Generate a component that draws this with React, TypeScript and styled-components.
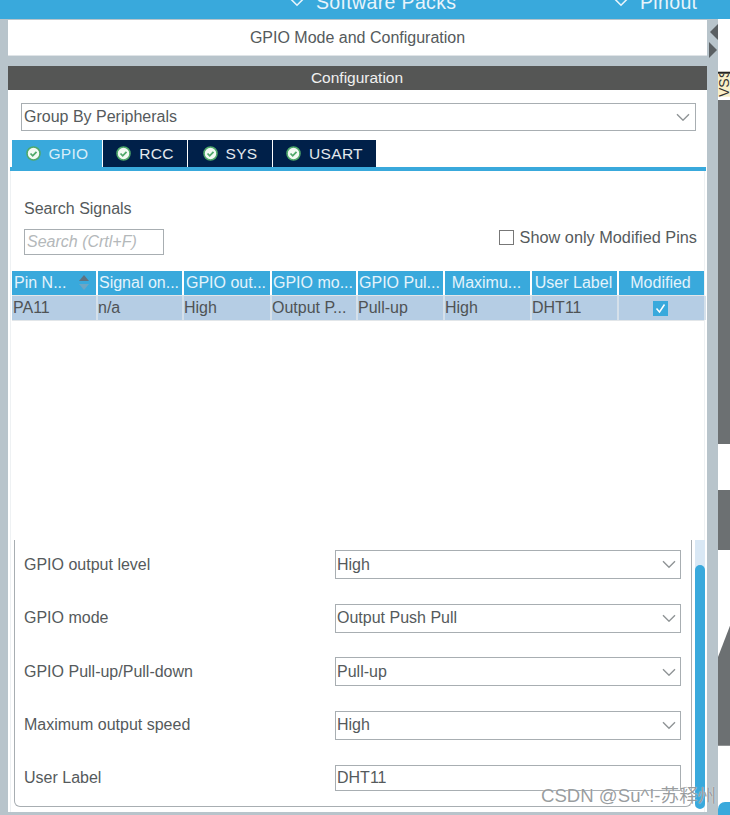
import styled, { createGlobalStyle } from "styled-components";

const GlobalStyle = createGlobalStyle`
  html, body {
    margin: 0;
    padding: 0;
    height: 815px;
    overflow: hidden;
    background: #b8c4cb;
    font-family: "Liberation Sans", Arial, sans-serif;
    color: #555a5c;
  }
  * { box-sizing: border-box; }
`;

const Page = styled.div`
  width: 730px;
  height: 815px;
  position: relative;
  overflow: hidden;
`;

const TopBar = styled.div`
  height: 19px;
  background: #39a9dc;
  display: flex;
  align-items: flex-end;
  overflow: hidden;
  padding: 0 0 7px 289px;
  color: #e8f4fb;
  font-size: 19.5px;
  letter-spacing: 0.35px;
`;

const TopItem = styled.div<{ $width: number }>`
  width: ${(p) => p.$width}px;
  display: flex;
  align-items: center;
  gap: 11px;
  line-height: 20px;
  white-space: nowrap;
`;

const Main = styled.div`
  height: 796px;
  display: flex;
  padding-left: 8px;
`;

const LeftPane = styled.div`
  width: 699px;
  display: flex;
  flex-direction: column;
`;

const TitleBar = styled.div`
  height: 36px;
  margin-top: 1px;
  background: #fff;
  border-bottom: 1px solid #dfe4e7;
  text-align: center;
  font-size: 16px;
  line-height: 35px;
`;

const ConfigPanel = styled.div`
  margin-top: 10px;
  height: 746px;
  background: #fff;
  display: flex;
  flex-direction: column;
`;

const ConfigHeader = styled.div`
  height: 24px;
  background: #555655;
  color: #f0f0f0;
  text-align: center;
  font-size: 15.5px;
  line-height: 23px;
  padding-right: 1px;
`;

const GroupSelect = styled.div`
  margin: 13px 11px 0 13px;
  height: 28px;
  border: 1px solid #a8aeb2;
  display: flex;
  align-items: center;
  justify-content: space-between;
  padding: 0 5px 0 2px;
  font-size: 16px;
`;

const Tabs = styled.div`
  display: flex;
  gap: 1px;
  margin: 9px 0 0 4px;
  height: 27px;
`;

const Tab = styled.div<{ $active?: boolean; $width: number }>`
  width: ${(p) => p.$width}px;
  background: ${(p) => (p.$active ? "#39a9dc" : "#002049")};
  color: ${(p) => (p.$active ? "#d8eef9" : "#e4e9ee")};
  display: flex;
  align-items: center;
  justify-content: center;
  gap: 8px;
  font-size: 15.5px;
  letter-spacing: 0.3px;
`;

const TabLine = styled.div`
  height: 4px;
  margin: 0 1px 0 2px;
  background: #39a9dc;
`;

const TabBody = styled.div`
  flex: 1;
  margin: 0 2px 0 2px;
  border-left: 1px solid #eef1f3;
  border-right: 1px solid #eef1f3;
  display: flex;
  flex-direction: column;
`;

const SearchRow = styled.div`
  display: flex;
  justify-content: space-between;
  align-items: flex-end;
  padding: 29px 7px 0 13px;
`;

const SearchColumn = styled.div`
  display: flex;
  flex-direction: column;
  gap: 11px;
`;

const SearchLabel = styled.div`
  font-size: 16px;
  line-height: 18px;
`;

const SearchBox = styled.div`
  width: 140px;
  height: 26px;
  border: 1px solid #a8aeb2;
  padding: 0 2px;
  font-size: 16px;
  line-height: 23px;
  font-style: italic;
  color: #b4b8ba;
`;

const ModifiedToggle = styled.div`
  display: flex;
  align-items: center;
  gap: 6px;
  font-size: 16.3px;
  line-height: 18px;
  margin-bottom: 9px;
`;

const CheckBox = styled.div`
  width: 15px;
  height: 15px;
  border: 1px solid #777;
  background: #fff;
`;

const Table = styled.div`
  margin: 16px 0 0 1px;
`;

const TableRow = styled.div<{ $head?: boolean }>`
  display: grid;
  grid-template-columns: 86px 86px 88px 86px 87px 87px 87px 87px;
  height: 25px;
  background: ${(p) => (p.$head ? "#fff" : "#b5cde4")};
  border-bottom: 1px solid #e2e6e9;
`;

const HeadCell = styled.div<{ $first?: boolean }>`
  background: #39a9dc;
  color: #e4f3fb;
  margin-right: 2px;
  padding: 0 2px 0 ${(p) => (p.$first ? 2 : 0)}px;
  height: 24px;
  font-size: 16px;
  line-height: 24px;
  white-space: nowrap;
  overflow: hidden;
  display: flex;
  align-items: center;
  justify-content: ${(p) => (p.$first ? "flex-start" : "center")};
  position: relative;
`;

const BodyCell = styled.div<{ $center?: boolean; $first?: boolean }>`
  border-right: 2px solid #d5e0ea;
  padding-left: ${(p) => (p.$first ? 1 : 0)}px;
  font-size: 16px;
  line-height: 24px;
  white-space: nowrap;
  overflow: hidden;
  color: #4f5355;
  display: flex;
  align-items: center;
  justify-content: ${(p) => (p.$center ? "center" : "flex-start")};
`;

const Tick = styled.div`
  width: 15px;
  height: 15px;
  margin-right: 2px;
  background: #39a9dc;
  display: flex;
  align-items: center;
  justify-content: center;
`;

const SortMark = styled.svg`
  position: absolute;
  right: 6px;
  top: 3px;
`;

const Spacer = styled.div`
  flex: 1;
`;

const DetailArea = styled.div`
  height: 267px;
  margin-bottom: 5px;
  display: flex;
  align-items: stretch;
  padding-left: 3px;
`;

const DetailFrame = styled.div`
  width: 679px;
  border-left: 1px solid #a8aeb2;
  border-right: 1px solid #a8aeb2;
  border-bottom: 1px solid #a8aeb2;
  border-bottom-left-radius: 6px;
  border-bottom-right-radius: 6px;
  padding: 10px 10px 0 9px;
  display: flex;
  flex-direction: column;
`;

const FieldRow = styled.div<{ $short?: boolean }>`
  display: grid;
  grid-template-columns: 311px 346px;
  align-items: center;
  height: ${(p) => (p.$short ? 26 : 29)}px;
  margin-bottom: 24.67px;
  font-size: 16px;
`;

const FieldControl = styled.div<{ $short?: boolean }>`
  height: ${(p) => (p.$short ? 26 : 29)}px;
  border: 1px solid #a8aeb2;
  display: flex;
  align-items: center;
  justify-content: space-between;
  padding: 0 4px 0 1px;
  font-size: 16px;
`;

const ScrollTrack = styled.div`
  width: 10px;
  margin-left: 3px;
  background: #d9e8f5;
  padding-top: 25px;
  display: flex;
`;

const ScrollThumb = styled.div`
  width: 10px;
  height: 244px;
  flex-shrink: 0;
  background: #39a9dc;
  border-radius: 5px;
`;

const Gutter = styled.div`
  width: 11px;
  display: flex;
  flex-direction: column;
  align-items: flex-end;
  gap: 2px;
  padding-top: 5px;
`;

const Preview = styled.div`
  width: 12px;
  display: flex;
  flex-direction: column;
  background: #fff;
`;

const PinTag = styled.div`
  margin-top: 53px;
  height: 26px;
  background: #f8efc8;
  border-bottom: 2px solid #222;
  color: #333;
  font-size: 14px;
  line-height: 12px;
  writing-mode: vertical-rl;
  transform: rotate(180deg);
  overflow: hidden;
`;

const PreviewBlock = styled.div<{ $height: number; $gap: number }>`
  height: ${(p) => p.$height}px;
  margin-top: ${(p) => p.$gap}px;
  background: #6c7072;
  flex-shrink: 0;
`;

const PreviewSlant = styled(PreviewBlock)`
  clip-path: polygon(100% 0, 100% 100%, 0 100%, 0 26%);
`;

const PreviewPill = styled.div`
  height: 14px;
  margin-top: 56px;
  background: #39a9dc;
  border-top-left-radius: 7px;
`;

const Watermark = styled.div`
  position: absolute;
  left: 541px;
  top: 785px;
  font-size: 18.6px;
  line-height: 22px;
  white-space: nowrap;
  color: rgba(120, 125, 128, 0.75);
  text-shadow: 0 0 1px #fff;
  font-family: "Liberation Sans", "Noto Sans CJK SC", sans-serif;
`;

const Chevron = ({ size = 14, color = "#8f9496" }: { size?: number; color?: string }) => (
  <svg width={size} height={size * 0.6} viewBox="0 0 14 8" fill="none">
    <path d="M1 1l6 6 6-6" stroke={color} strokeWidth="1.4" />
  </svg>
);

const StatusIcon = () => (
  <svg width="15" height="15" viewBox="0 0 15 15">
    <circle cx="7.5" cy="7.5" r="6.5" fill="#f2faf4" stroke="#4fa96b" strokeWidth="1.6" />
    <path d="M4.5 7.5l2.2 2.3 3.8-4" fill="none" stroke="#4fa96b" strokeWidth="1.8" />
  </svg>
);

const tabs = [
  { name: "GPIO", width: 90, active: true },
  { name: "RCC", width: 84 },
  { name: "SYS", width: 84 },
  { name: "USART", width: 103 },
];

const headers = [
  "Pin N...",
  "Signal on...",
  "GPIO out...",
  "GPIO mo...",
  "GPIO Pul...",
  "Maximu...",
  "User Label",
  "Modified",
];

const cells = ["PA11", "n/a", "High", "Output P...", "Pull-up", "High", "DHT11"];

const fields = [
  { label: "GPIO output level", value: "High", select: true },
  { label: "GPIO mode", value: "Output Push Pull", select: true },
  { label: "GPIO Pull-up/Pull-down", value: "Pull-up", select: true },
  { label: "Maximum output speed", value: "High", select: true },
  { label: "User Label", value: "DHT11", select: false },
];

export default function App() {
  return (
    <Page>
      <GlobalStyle />
      <TopBar>
        <TopItem $width={324}>
          <Chevron size={16} color="#e8f4fb" />
          Software Packs
        </TopItem>
        <TopItem $width={90}>
          <Chevron size={16} color="#e8f4fb" />
          Pinout
        </TopItem>
      </TopBar>
      <Main>
        <LeftPane>
          <TitleBar>GPIO Mode and Configuration</TitleBar>
          <ConfigPanel>
            <ConfigHeader>Configuration</ConfigHeader>
            <GroupSelect>
              Group By Peripherals
              <Chevron />
            </GroupSelect>
            <Tabs>
              {tabs.map((tab) => (
                <Tab key={tab.name} $active={tab.active} $width={tab.width}>
                  <StatusIcon />
                  {tab.name}
                </Tab>
              ))}
            </Tabs>
            <TabLine />
            <TabBody>
              <SearchRow>
                <SearchColumn>
                  <SearchLabel>Search Signals</SearchLabel>
                  <SearchBox>Search (Crtl+F)</SearchBox>
                </SearchColumn>
                <ModifiedToggle>
                  <CheckBox />
                  Show only Modified Pins
                </ModifiedToggle>
              </SearchRow>
              <Table>
                <TableRow $head>
                  {headers.map((h, i) => (
                    <HeadCell key={h} $first={i === 0}>
                      {h}
                      {i === 0 && (
                        <SortMark width="12" height="18" viewBox="0 0 12 18">
                          <path d="M6 1l5 6H1z" fill="#5f7280" />
                          <path d="M1 10h10l-5 6z" fill="#6da6c4" />
                        </SortMark>
                      )}
                    </HeadCell>
                  ))}
                </TableRow>
                <TableRow>
                  {cells.map((c, i) => (
                    <BodyCell key={c} $first={i === 0}>
                      {c}
                    </BodyCell>
                  ))}
                  <BodyCell $center>
                    <Tick>
                      <svg width="11" height="11" viewBox="0 0 11 11" fill="none">
                        <path d="M1.5 5.5l3 3.5 5-7.5" stroke="#fff" strokeWidth="1.5" />
                      </svg>
                    </Tick>
                  </BodyCell>
                </TableRow>
              </Table>
              <Spacer />
              <DetailArea>
                <DetailFrame>
                  {fields.map((f) => (
                    <FieldRow key={f.label} $short={!f.select}>
                      {f.label}
                      <FieldControl $short={!f.select}>
                        {f.value}
                        {f.select && <Chevron />}
                      </FieldControl>
                    </FieldRow>
                  ))}
                </DetailFrame>
                <ScrollTrack>
                  <ScrollThumb />
                </ScrollTrack>
              </DetailArea>
            </TabBody>
          </ConfigPanel>
        </LeftPane>
        <Gutter>
          <svg width="9" height="16" viewBox="0 0 9 16">
            <path d="M9 0v16L1 8z" fill="#5a5f62" />
          </svg>
          <svg width="9" height="16" viewBox="0 0 9 16">
            <path d="M0 0v16l8-8z" fill="#5a5f62" />
          </svg>
        </Gutter>
        <Preview>
          <PinTag>VSS</PinTag>
          <PreviewBlock $height={344} $gap={3} />
          <PreviewBlock $height={60} $gap={46} />
          <PreviewSlant $height={120} $gap={76} />
          <PreviewPill />
        </Preview>
      </Main>
      <Watermark>CSDN @Su^!-苏释州</Watermark>
    </Page>
  );
}
